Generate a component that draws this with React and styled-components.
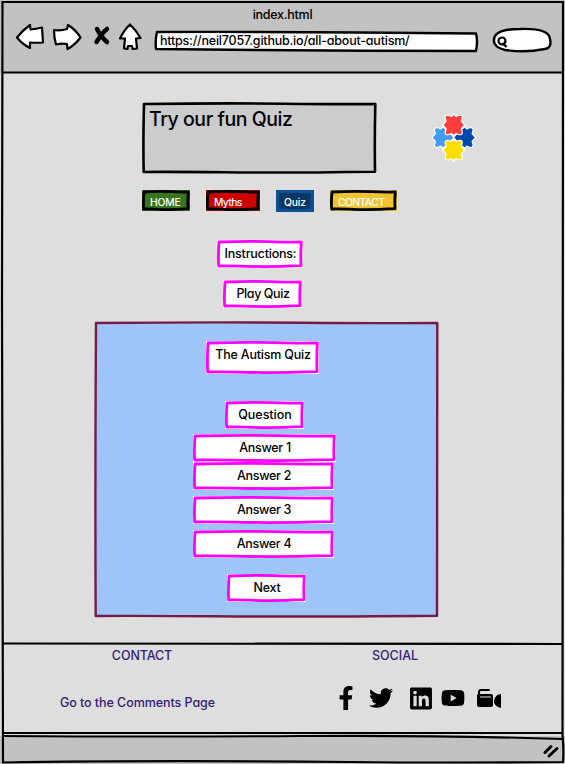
import React from 'react';
import styled, { createGlobalStyle } from 'styled-components';
import { FaFacebookF, FaTwitter, FaLinkedin, FaYoutube } from 'react-icons/fa';

const GlobalStyle = createGlobalStyle`
  * { box-sizing: border-box; }
  body { margin: 0; background: #dedede; }
`;

const Window = styled.div`
  position: relative;
  display: flex;
  flex-direction: column;
  width: 565px;
  height: 764px;
  overflow: hidden;
  background: #dedede;
  font-family: Inter, 'Liberation Sans', sans-serif;
  font-feature-settings: 'cv11' 1, 'calt' 0;
  font-weight: 500;
  font-size: 13px;
  line-height: 16px;
  color: #000;
`;

const Drawing = styled.svg`
  display: block;
  flex: none;
  overflow: visible;
`;

const Overlay = styled(Drawing)`
  position: absolute;
  inset: 0;
  pointer-events: none;
`;

const Label = styled.span`
  position: relative;
  white-space: nowrap;
  font-size: ${(p) => p.$size || 12.5}px;
  font-weight: ${(p) => p.$weight || 500};
  letter-spacing: ${(p) => p.$track ?? -0.2}px;
`;

const Chrome = styled.header`
  height: 73px;
  flex: none;
  padding-top: 6px;
  background: #c2c2c2;
`;

const Title = styled.div`
  height: 16px;
  text-align: center;
`;

const Toolbar = styled.div`
  display: flex;
  align-items: flex-start;
  height: 30px;
  padding-left: 15px;
`;

const Address = styled.div`
  position: relative;
  flex: none;
  width: 324px;
  height: 21px;
  margin: 9px 0 0 9px;
  padding: 1px 0 0 6px;
`;

const SearchField = styled(Drawing)`
  margin: 5px 0 0 14px;
`;

const Main = styled.main`
  display: flex;
  flex-direction: column;
  align-items: flex-start;
  height: 570px;
  flex: none;
  padding-top: 29px;
`;

const Hero = styled.div`
  display: flex;
  padding-left: 142px;
  gap: 54px;
  height: 72px;
`;

const Box = styled.div`
  position: relative;
  display: flex;
  flex: none;
  justify-content: ${(p) => (p.$start ? 'flex-start' : 'center')};
  align-items: flex-start;
  width: ${(p) => p.$w}px;
  height: ${(p) => p.$h}px;
  margin-top: ${(p) => p.$top || 0}px;
  margin-left: ${(p) => p.$left || 0}px;
  padding: ${(p) => p.$pad || '6px 0 0 1px'};
`;

const Nav = styled.nav`
  display: flex;
  gap: 16px;
  margin: 16px 0 0 142px;
  color: #fff;
`;

const Panel = styled.section`
  position: relative;
  display: flex;
  flex-direction: column;
  align-items: flex-start;
  width: 345px;
  height: 297px;
  margin: 13px 0 0 94px;
`;

const Footer = styled.footer`
  display: grid;
  grid-template-columns: 285px 1fr;
  grid-template-rows: 47px 1fr;
  height: 93px;
  flex: none;
  padding-top: 4px;
  color: #351c75;
`;

const FooterCell = styled.div`
  text-align: center;
  padding-right: ${(p) => p.$right || 0}px;
`;

const Social = styled.div`
  display: flex;
  align-items: flex-start;
  padding-left: 53px;
  margin-top: -8px;
  color: #000;
`;

const SocialIcon = styled.span`
  display: flex;
  flex: none;
  width: ${(p) => p.$w}px;
  margin-right: ${(p) => p.$gap}px;
`;

const StatusBar = styled.div`
  display: flex;
  justify-content: flex-end;
  height: 28px;
  flex: none;
  padding: 8px 5px 0 0;
  background: #c2c2c2;
`;

function Outline({ w, h, fill, stroke, width = 3, backing }) {
  const d = `M2 2 Q${w * 0.35} 1 ${w * 0.6} 1.7 T${w - 1.7} 2
    Q${w - 2.5} ${h * 0.5} ${w - 2} ${h - 2.3}
    Q${w * 0.6} ${h - 1} ${w * 0.35} ${h - 1.7} T1.7 ${h - 2}
    Q1 ${h * 0.6} 2 2 Z`;
  return (
    <Overlay width={w} height={h}>
      {backing && <rect width={w} height={h} fill={backing} />}
      <path d={d} fill={fill} stroke={stroke} strokeWidth={width} strokeLinejoin="round" />
    </Overlay>
  );
}

function SketchBox({ w, h, top, left, pad, start, fill = '#fff', stroke = '#ff00ff', width = 2.8, backing = '#fff', children, size, track, weight }) {
  return (
    <Box $w={w} $h={h} $top={top} $left={left} $pad={pad} $start={start}>
      <Outline w={w} h={h} fill={fill} stroke={stroke} width={width} backing={backing} />
      <Label $size={size} $track={track} $weight={weight}>{children}</Label>
    </Box>
  );
}

function NavButton({ w, h = 21, color, inner = color, border = '#000', track = -0.15, children }) {
  return (
    <SketchBox w={w} h={h} start pad="4px 0 0 8px" size={10.3} track={track} fill={inner} stroke={border} backing={border === '#000' ? color : border}>
      {children}
    </SketchBox>
  );
}

function Answer({ w = 141, top, children }) {
  return <SketchBox w={w} h={28} top={top} left={99} track={-0.3}>{children}</SketchBox>;
}

const PIECE =
  'M0-11 L2.3-8.5 L4.5-9.5 Q8.8-10.500 8.6-7.200 L7.6-3.800 L11 0 L7.6 3.800 L8.6 7.200 Q8.8 10.500 4.5 9.500 L2.3 8.500 L0 11 L-2.3 8.500 L-4.5 9.500 Q-8.8 10.500 -8.6 7.200 L-7.6 3.800 L-11 0 L-7.6-3.800 L-8.6-7.200 Q-8.8-10.500 -4.5-9.500 L-2.3-8.500 Z';

function PuzzleLogo() {
  return (
    <Drawing width="46" height="72" viewBox="431 102 46 72">
      <g stroke="#fff" strokeWidth="1.2" strokeLinejoin="round">
        <path d={PIECE} transform="translate(443 137.500)" fill="#429bf5" />
        <path d={PIECE} transform="translate(464.500 137.500)" fill="#004aad" />
        <path d={PIECE} transform="translate(453.700 125)" fill="#ff3f3f" />
        <path d={PIECE} transform="translate(453.700 150)" fill="#ffdd00" />
      </g>
    </Drawing>
  );
}

function BrowserButtons() {
  return (
    <Drawing width="130" height="30" viewBox="15 22 130 30">
      <g fill="#fff" stroke="#000" strokeWidth="2.2" strokeLinejoin="round">
        <path d="M17 37.500 Q23 30 30 25 L30.500 29.500 Q36 29 42 27.500 L43 42.500 Q36 43 30 42.500 L30 48 Q22 44 17 37.500Z" />
        <path d="M54 30 Q61 31 67 29 L68 25 Q76 30 80.500 37.500 Q75 45 67.500 49 L67 44 Q62 43 56 44.500 Q54 38 54 30Z" />
        <path d="M130 24.500 Q136 30 140.500 38 L136 38.500 L137 48.500 L132.500 49 L132 46 L128 46 L127.500 49 L124 48.500 L125 38.500 L120 38.500 Q124 30 130 24.500Z" />
      </g>
      <path d="M97 29 Q101 37 107 42 M107 29 Q102 33 96.500 42" fill="none" stroke="#000" strokeWidth="4.5" strokeLinecap="round" />
    </Drawing>
  );
}

export default function App() {
  return (
    <>
      <GlobalStyle />
      <Window>
        <Chrome>
          <Title><Label $track={-0.27}>index.html</Label></Title>
          <Toolbar>
            <BrowserButtons />
            <Address>
              <Overlay width="324" height="21">
                <path d="M3 1 Q140 0.500 322 2.500 Q324 10 322 20 Q160 20 2 18 Q1 9 3 1Z" fill="#fff" stroke="#000" strokeWidth="2.400" strokeLinejoin="round" />
              </Overlay>
              <Label $track={-0.21}>https://neil7057.github.io/all-about-autism/</Label>
            </Address>
            <SearchField width="62" height="26" viewBox="492 28 62 26">
              <path d="M494 41 Q494 30 520 30 Q549 29 550 40 Q552 49 545 50 Q525 54 505 51 Q493 48 494 41Z" fill="#fff" stroke="#000" strokeWidth="2.400" />
              <circle cx="502" cy="42" r="3.500" fill="none" stroke="#000" strokeWidth="2.200" />
              <path d="M502.500 44 L506.500 48" stroke="#000" strokeWidth="2.400" />
            </SearchField>
          </Toolbar>
        </Chrome>

        <Main>
          <Hero>
            <SketchBox w={235} h={72} start pad="9px 0 0 7px" size={19.5} track={-0.46} weight={450} fill="#ccc" stroke="#000" width={2.6} backing={null}>Try our fun Quiz</SketchBox>
            <PuzzleLogo />
          </Hero>
          <Nav>
            <NavButton w={48} color="#38761d">HOME</NavButton>
            <NavButton w={54} color="#cc0000" track={-0.6}>Myths</NavButton>
            <NavButton w={38} h={22} color="#073763" border="#0b5394">Quiz</NavButton>
            <NavButton w={67} color="#f1c232" track={-0.55}>CONTACT</NavButton>
          </Nav>
          <SketchBox w={86} h={28} top={28} left={217}>Instructions:</SketchBox>
          <SketchBox w={79} h={28} top={12} left={223} track={-0.4}>Play Quiz</SketchBox>
          <Panel>
            <Outline w={345} h={297} fill="#9fc5f8" stroke="#741b47" width={2.4} />
            <SketchBox w={113} h={33} top={20} left={112} track={-0.2}>The Autism Quiz</SketchBox>
            <SketchBox w={79} h={28} top={27} left={131} track={0}>Question</SketchBox>
            <Answer w={143} top={5}>Answer 1</Answer>
            <Answer>Answer 2</Answer>
            <Answer top={6}>Answer 3</Answer>
            <Answer top={6}>Answer 4</Answer>
            <SketchBox w={79} h={28} top={16} left={133}>Next</SketchBox>
          </Panel>
        </Main>

        <Footer>
          <FooterCell $right={1}><Label $track={-0.1}>CONTACT</Label></FooterCell>
          <FooterCell $right={60}><Label $track={0}>SOCIAL</Label></FooterCell>
          <FooterCell $right={10}><Label $track={-0.06}>Go to the Comments Page</Label></FooterCell>
          <Social>
            <SocialIcon $w={16} $gap={15}><FaFacebookF size={24} /></SocialIcon>
            <SocialIcon $w={24} $gap={17}><FaTwitter size={24} /></SocialIcon>
            <SocialIcon $w={22} $gap={9}><FaLinkedin size={25} /></SocialIcon>
            <SocialIcon $w={24} $gap={11}><FaYoutube size={24} /></SocialIcon>
            <Drawing width="26" height="24" viewBox="476 686 26 24">
              <path d="M477 695 Q477 694 479 694 H491 Q493 694 493 696 V705 Q493 707 491 707 H479 Q477 707 477 705Z M494 700 Q496 694 501 694 V708 Q496 707 494 703Z" />
              <path d="M479 694 V692 Q479 690 481 690 H489" fill="none" stroke="#000" strokeWidth="2" strokeLinecap="round" />
              <path d="M480 697 H491" stroke="#dedede" strokeWidth="1" />
            </Drawing>
          </Social>
        </Footer>

        <StatusBar>
          <Drawing width="18" height="15" viewBox="542 744 18 15">
            <path d="M545 752.500 L551 746.500 M549 756 L557 748.500" stroke="#000" strokeWidth="3" strokeLinecap="round" />
          </Drawing>
        </StatusBar>

        <Overlay width="565" height="764">
          <g fill="none" stroke="#000" strokeWidth="2.2">
            <path d="M2.500 2 Q150 2.500 300 2 T563 2 L562.500 735 Q564 750 563 762 Q450 763 350 762 Q150 760 3 762.500 L2 300Z" />
            <path d="M2 72.500 H563 M2 643.500 Q290 643 563 644 M2 733 H563" />
            <path d="M2 736 Q160 737 300 736 T563 739" />
          </g>
        </Overlay>
      </Window>
    </>
  );
}
